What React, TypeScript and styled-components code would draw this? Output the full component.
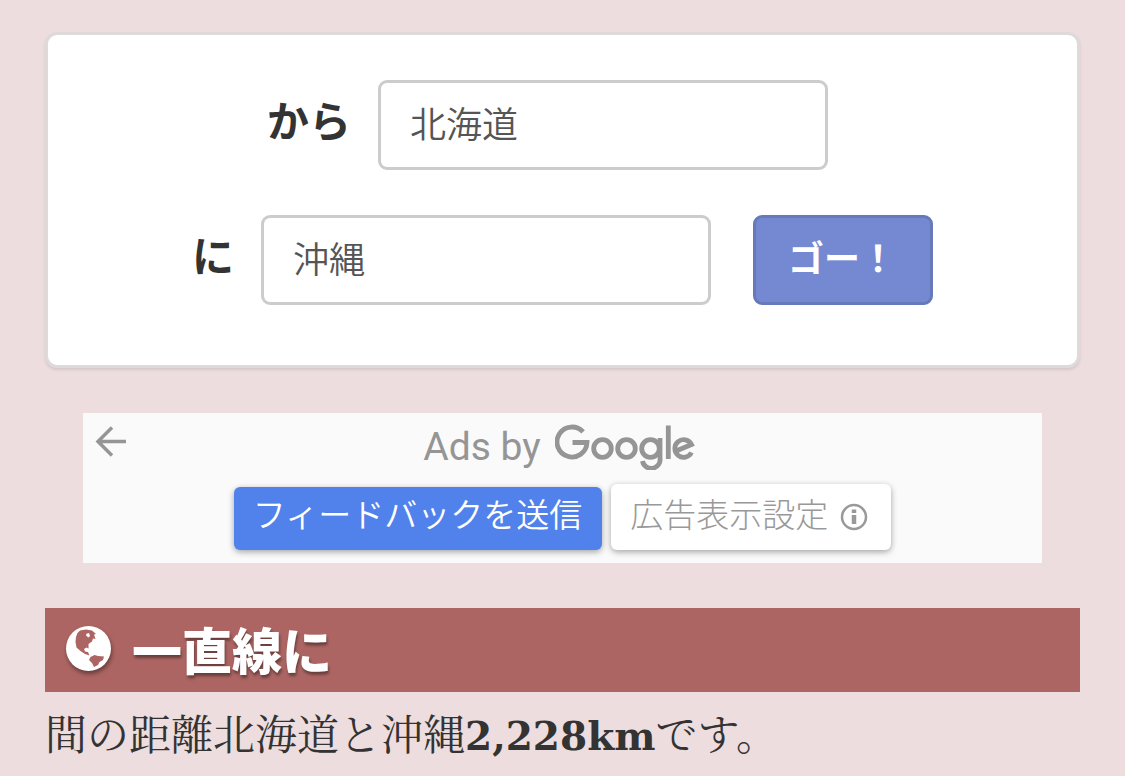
import React from 'react';
import styled, { createGlobalStyle } from 'styled-components';

const sans = '"Noto Sans CJK JP", sans-serif';

const Global = createGlobalStyle`
  * { box-sizing: border-box; }
  body { margin: 0; background: #edddde; color: #333; font-family: ${sans}; }
`;

const Page = styled.main`
  padding: 32px 45px 0;
`;

const Form = styled.form`
  display: flex;
  flex-direction: column;
  align-items: center;
  gap: 45px;
  padding: 45px 0 60px;
  background: #fff;
  border: 3px solid #dedada;
  border-radius: 12px;
  box-shadow: 0 2px 3px rgba(0, 0, 0, 0.1);
`;

const Row = styled.div<{ $trailing?: number }>`
  display: flex;
  align-items: center;
  padding-right: ${(p) => p.$trailing ?? 0}px;
`;

const Label = styled.label`
  margin-right: 27px;
  padding-bottom: 12px;
  font-size: 42px;
  line-height: 60px;
  font-weight: 700;
`;

const Field = styled.input`
  width: 450px;
  height: 90px;
  padding: 0 29px 6px;
  border: 3px solid #ccc;
  border-radius: 9px;
  background: #fff;
  color: #555;
  font: 350 36px ${sans};
`;

const Go = styled.button`
  width: 180px;
  height: 90px;
  margin-left: 42px;
  padding: 0 2px 8px 0;
  border: 3px solid #667ab9;
  border-radius: 9px;
  background: #7489d2;
  color: #fff;
  font: 700 36px ${sans};
`;

const Ad = styled.section`
  position: relative;
  display: flex;
  flex-direction: column;
  align-items: center;
  height: 150px;
  margin: 45px 38px;
  background: #fafafa;
  color: #959595;
`;

const Back = styled.button`
  position: absolute;
  left: 12px;
  top: 12px;
  padding: 0;
  border: 0;
  background: none;
  line-height: 0;
`;

const AdTitle = styled.div`
  display: flex;
  align-items: center;
  gap: 14px;
  height: 68px;
  padding-right: 6px;
  font: 39px Roboto, sans-serif;
`;

const AdActions = styled.div`
  display: flex;
  align-items: flex-end;
  gap: 9px;
  height: 69px;
`;

const AdButton = styled.button<{ $primary?: boolean }>`
  display: flex;
  align-items: center;
  gap: 12px;
  height: ${(p) => (p.$primary ? 63 : 66)}px;
  padding: ${(p) => (p.$primary ? '0 20px 12px 19px' : '0 23px 9px 19px')};
  border: 0;
  border-radius: 6px;
  background: ${(p) => (p.$primary ? '#5182eb' : '#fff')};
  color: ${(p) => (p.$primary ? '#fff' : '#999')};
  box-shadow: 0 2px 6px rgba(0, 0, 0, 0.35);
  font: ${(p) => (p.$primary ? 350 : 300)} 33px ${sans};
  white-space: nowrap;
  svg { margin-top: 8px; }
`;

const Heading = styled.h2`
  display: flex;
  align-items: center;
  gap: 21px;
  height: 84px;
  margin: 0;
  padding: 0 21px 4px;
  background: #ac6562;
  color: #fff;
  font-size: 50px;
  line-height: 80px;
  font-weight: 900;
  text-shadow: 1px 3px 3px rgba(0, 0, 0, 0.4);
  svg { filter: drop-shadow(1px 3px 2px rgba(0, 0, 0, 0.4)); }
`;

const Result = styled.p`
  margin: 0;
  font-family: "Noto Serif CJK JP", "Noto Sans CJK JP", serif;
  font-size: 42px;
  line-height: 80px;
  font-weight: 400;
  white-space: nowrap;
`;

const Distance = styled.strong`
  font: 700 39px "DejaVu Serif", serif;
`;

const GoogleLogo = () => (
  <svg width="141" height="46" viewBox="0 0 141 46" fill="none" stroke="#959595" strokeWidth="4.800" role="img" aria-label="Google">
    <path d="M28.100 7.900A15 15 0 1 0 32 18.500H17.500" />
    <circle cx="47.500" cy="24.500" r="8.800" />
    <circle cx="71.500" cy="24.500" r="8.800" />
    <circle cx="95.500" cy="24.500" r="8.800" />
    <path d="M105 14V34A8.800 8.800 0 0 1 87.500 37M113.300 1.500V35" />
    <path d="M136.500 28.500A8.800 8.800 0 1 1 136.500 20.500L121 27" />
  </svg>
);

const Globe = () => (
  <svg width="45" height="45" viewBox="0 0 45 45" aria-hidden="true">
    <circle cx="22.500" cy="22.500" r="22.500" fill="#fff" />
    <path
      fill="#ac6562"
      d="M10 11L11.500 7L14 4.500L20 3.500L26 4.500L30 8L28 8.500L29.500 13L27 12.500L26 15.500L22.500 18L22.500 22.500L20.500 21.500L18 23L19 25.500L22 26L23.500 29.500L19 28L14.500 25L10.500 21.500L9.500 16ZM24.500 31L28.500 29L32 30L38 30.500L37 34L33.500 36L32 39L28 41L26 37L23 34Z"
    />
    <path fill="#fff" d="M20 8L23 7L24 10L22.500 11.500L20.500 10Z" />
  </svg>
);

export default function App() {
  return (
    <Page>
      <Global />
      <Form onSubmit={(e) => e.preventDefault()}>
        <Row $trailing={30}>
          <Label htmlFor="from">から</Label>
          <Field id="from" defaultValue="北海道" />
        </Row>
        <Row>
          <Label htmlFor="to">に</Label>
          <Field id="to" defaultValue="沖縄" />
          <Go type="submit">ゴー！</Go>
        </Row>
      </Form>
      <Ad>
        <Back type="button" aria-label="戻る">
          <svg width="32" height="32" viewBox="0 0 32 32" fill="none" stroke="#959595" strokeWidth="3.500">
            <path d="M31 16.500H3M17 2.500L3 16.500L17 30.500" />
          </svg>
        </Back>
        <AdTitle>Ads by <GoogleLogo /></AdTitle>
        <AdActions>
          <AdButton type="button" $primary>フィードバックを送信</AdButton>
          <AdButton type="button">
            広告表示設定
            <svg width="28" height="28" viewBox="0 0 28 28" fill="none" stroke="#999" aria-hidden="true">
              <circle cx="14" cy="14" r="12" strokeWidth="2.500" />
              <path d="M14 12V21M14 6.500V10" strokeWidth="4.500" />
            </svg>
          </AdButton>
        </AdActions>
      </Ad>
      <Heading><Globe />一直線に</Heading>
      <Result>間の距離北海道と沖縄<Distance>2,228km</Distance>です。</Result>
    </Page>
  );
}
